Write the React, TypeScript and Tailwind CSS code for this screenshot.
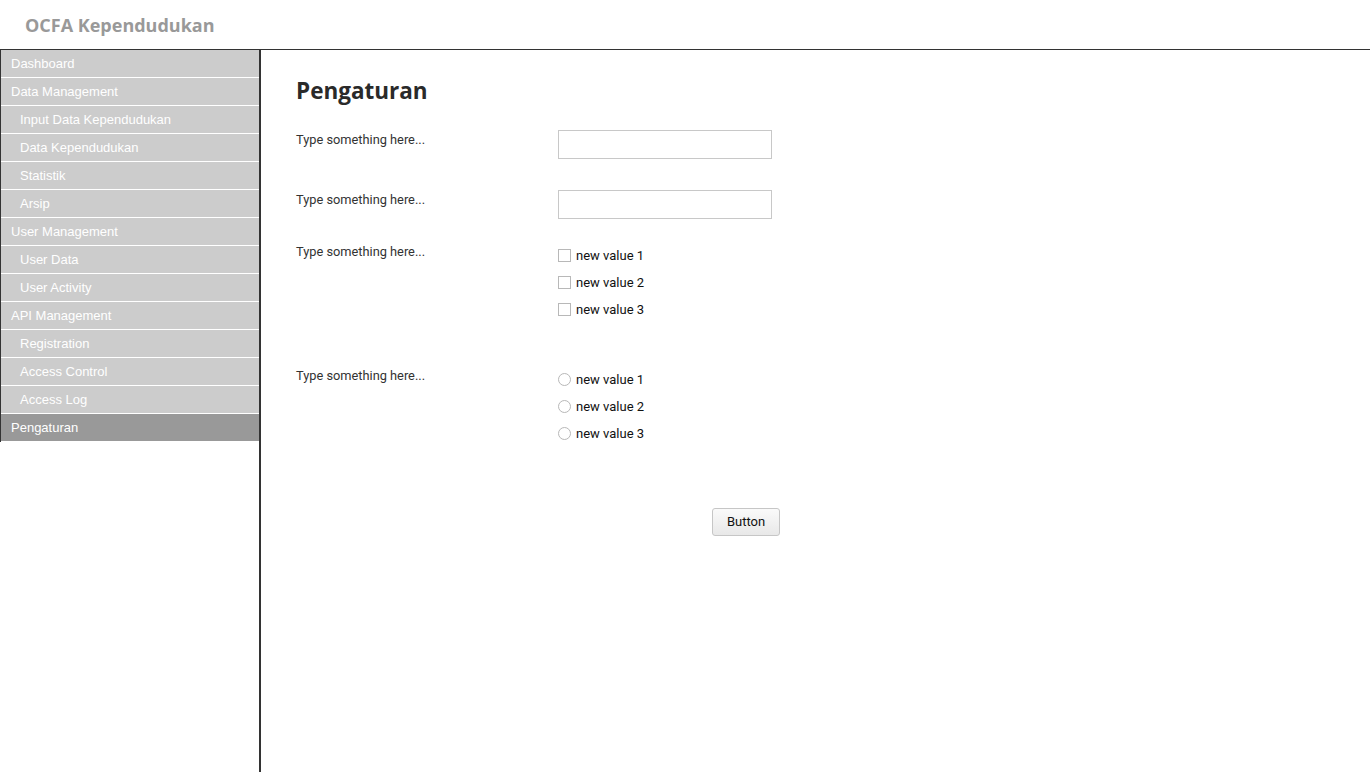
import React from "react";

const navItems: { label: string; sub?: boolean; active?: boolean }[] = [
  { label: "Dashboard" },
  { label: "Data Management" },
  { label: "Input Data Kependudukan", sub: true },
  { label: "Data Kependudukan", sub: true },
  { label: "Statistik", sub: true },
  { label: "Arsip", sub: true },
  { label: "User Management" },
  { label: "User Data", sub: true },
  { label: "User Activity", sub: true },
  { label: "API Management" },
  { label: "Registration", sub: true },
  { label: "Access Control", sub: true },
  { label: "Access Log", sub: true },
  { label: "Pengaturan", active: true },
];

function Checkbox({ label }: { label: string }) {
  return (
    <div className="flex h-[27px] items-center">
      <span className="box-border h-[13px] w-[13px] border border-[#b8b8b8] bg-white" />
      <span className="ml-[5px] text-[13px] text-[#111]">{label}</span>
    </div>
  );
}

function Radio({ label }: { label: string }) {
  return (
    <div className="flex h-[27px] items-center">
      <span className="box-border h-[13px] w-[13px] rounded-full border border-[#b8b8b8] bg-white" />
      <span className="ml-[5px] text-[13px] text-[#111]">{label}</span>
    </div>
  );
}

export default function App() {
  return (
    <div className="flex h-[772px] w-[1370px] flex-col overflow-hidden bg-white">
      <header className="flex h-[50px] shrink-0 items-center border-b border-[#333] pl-[25px]">
        <h1
          className="mt-[1px] text-[18px] font-bold text-[#999]"
          style={{ fontFamily: '"Open Sans", "Noto Sans", sans-serif' }}
        >
          OCFA Kependudukan
        </h1>
      </header>
      <div className="flex flex-1">
        <nav
          className="w-[261px] shrink-0 border-r-2 border-[#333]"
          style={{ fontFamily: '"Liberation Sans", Arial, sans-serif' }}
        >
          <div className="border-l border-[#333]">
            {navItems.map((it) => (
              <div
                key={it.label}
                className={`flex h-[28px] items-center border-b border-white text-[13px] text-white ${
                  it.active ? "bg-[#999]" : "bg-[#ccc]"
                } ${it.sub ? "pl-[19px]" : "pl-[10px]"}`}
              >
                {it.label}
              </div>
            ))}
          </div>
        </nav>
        <main
          className="flex-1 pl-[35px] text-[#333]"
          style={{ fontFamily: 'Roboto, "Liberation Sans", sans-serif' }}
        >
          <h2
            className="mt-[27px] text-[22.5px] leading-[28px] font-bold text-[#2a2a2a]"
            style={{ fontFamily: '"Open Sans", "Noto Sans", sans-serif' }}
          >
            Pengaturan
          </h2>
          <div className="mt-[25px] flex">
            <div className="w-[262px] pt-[2px] text-[12.8px] leading-[16px]">Type something here...</div>
            <input className="box-border h-[29px] w-[214px] border border-[#c8c8c8] outline-none" />
          </div>
          <div className="mt-[31px] flex">
            <div className="w-[262px] pt-[2px] text-[12.8px] leading-[16px]">Type something here...</div>
            <input className="box-border h-[29px] w-[214px] border border-[#c8c8c8] outline-none" />
          </div>
          <div className="mt-[23px] flex">
            <div className="w-[262px] pt-[2px] text-[12.8px] leading-[16px]">Type something here...</div>
            <div>
              <Checkbox label="new value 1" />
              <Checkbox label="new value 2" />
              <Checkbox label="new value 3" />
            </div>
          </div>
          <div className="mt-[43px] flex">
            <div className="w-[262px] pt-[2px] text-[12.8px] leading-[16px]">Type something here...</div>
            <div>
              <Radio label="new value 1" />
              <Radio label="new value 2" />
              <Radio label="new value 3" />
            </div>
          </div>
          <div className="mt-[61px] pl-[416px]">
            <button className="box-border h-[28px] w-[68px] rounded-[3px] border border-[#c6c6c6] bg-gradient-to-b from-[#fafafa] to-[#e8e8e8] text-[13px] text-[#111]">
              Button
            </button>
          </div>
        </main>
      </div>
    </div>
  );
}
